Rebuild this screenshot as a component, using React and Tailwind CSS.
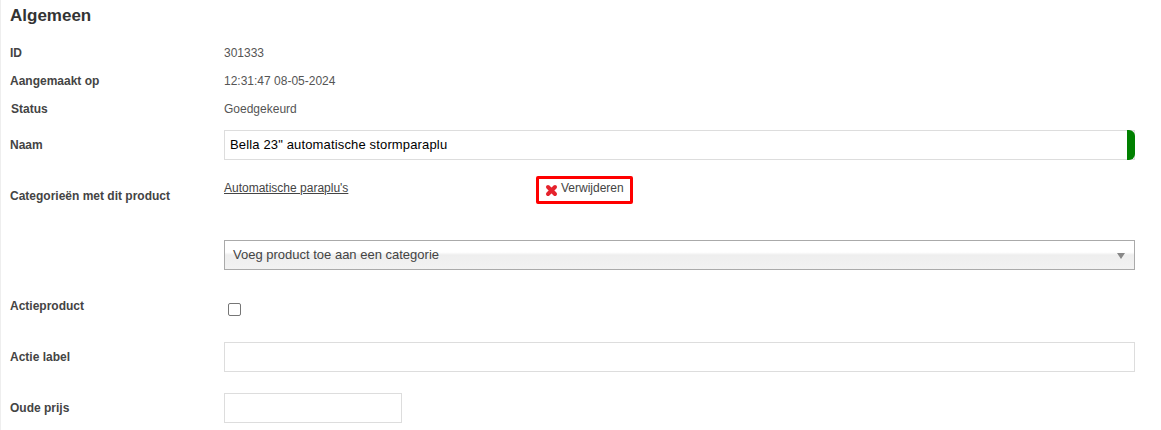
import React from "react";

function Row({ label, className = "", labelClass = "", children }) {
  return (
    <div className={`flex ${className}`}>
      <div className={`w-[214px] shrink-0 font-bold text-[#444] ${labelClass}`}>{label}</div>
      <div className="flex-1 min-w-0">{children}</div>
    </div>
  );
}

export default function App() {
  return (
    <div className="w-[1161px] h-[430px] overflow-hidden bg-white border-l border-[#eeeeee] pl-[9px] pr-[26px] font-['Liberation_Sans',Arial,sans-serif] text-[12px] leading-[16px] text-[#555]">
      <h2 className="pt-[6px] h-[39px] text-[17px] leading-[20px] font-bold text-[#333]">Algemeen</h2>

      <Row label="ID" className="h-[28px] items-center">301333</Row>
      <Row label="Aangemaakt op" className="h-[28px] items-center">12:31:47 08-05-2024</Row>
      <Row label="Status" className="h-[28px] items-center" labelClass="pl-[1px]">Goedgekeurd</Row>

      <Row label="Naam" className="mt-[7px] h-[30px] items-center">
        <div className="relative">
          <input
            readOnly
            value={'Bella 23" automatische stormparaplu'}
            className="block w-full h-[30px] border border-[#dddddd] pl-[5px] pr-[10px] pb-[2px] text-[13px] tracking-[0.15px] text-black outline-none"
          />
          <div className="absolute right-0 top-0 h-[30px] w-[8px] rounded-r-[6px] bg-[#008000]" />
        </div>
      </Row>

      <Row label="Categorieën met dit product" className="mt-[16px] h-[28px]" labelClass="pt-[12px]">
        <div className="flex items-start h-[28px]">
          <a href="#" className="w-[312px] mt-[4px] underline text-[#444]">Automatische paraplu's</a>
          <button className="flex items-center h-[28px] w-[97px] border-[3px] border-[#ff0000] rounded-[2px] pl-[6px] pb-[4px] text-[#444]">
            <svg width="13" height="13" viewBox="0 0 13 13" className="mr-[3px] mt-[4px]">
              <path d="M3 3L10 10M10 3L3 10" stroke="#e5232d" strokeWidth="4" strokeLinecap="round" />
            </svg>
            Verwijderen
          </button>
        </div>
      </Row>

      <Row label="" className="mt-[36px] h-[30px]">
        <div className="relative h-[30px] border border-[#aaaaaa] bg-[linear-gradient(#ffffff_0%,#ffffff_40%,#eeeeee_50%,#f2f2f2_100%)] pl-[8px] text-[13px] leading-[28px] text-[#444]">
          Voeg product toe aan een categorie
          <div className="absolute right-[9px] top-[12px] w-0 h-0 border-x-[4px] border-x-transparent border-t-[6px] border-t-[#888]" />
        </div>
      </Row>

      <Row label="Actieproduct" className="mt-[25px] h-[22px]" labelClass="pt-[3px]">
        <input
          type="checkbox"
          className="block ml-[4px] mt-[8px] w-[13px] h-[13px] appearance-none bg-white border border-[#767676] rounded-[2px]"
        />
      </Row>

      <Row label="Actie label" className="mt-[25px] h-[30px] items-center">
        <input className="block w-full h-[30px] border border-[#dddddd] outline-none" />
      </Row>

      <Row label="Oude prijs" className="mt-[21px] h-[30px] items-center">
        <input className="block w-[178px] h-[30px] border border-[#dddddd] outline-none" />
      </Row>
    </div>
  );
}
